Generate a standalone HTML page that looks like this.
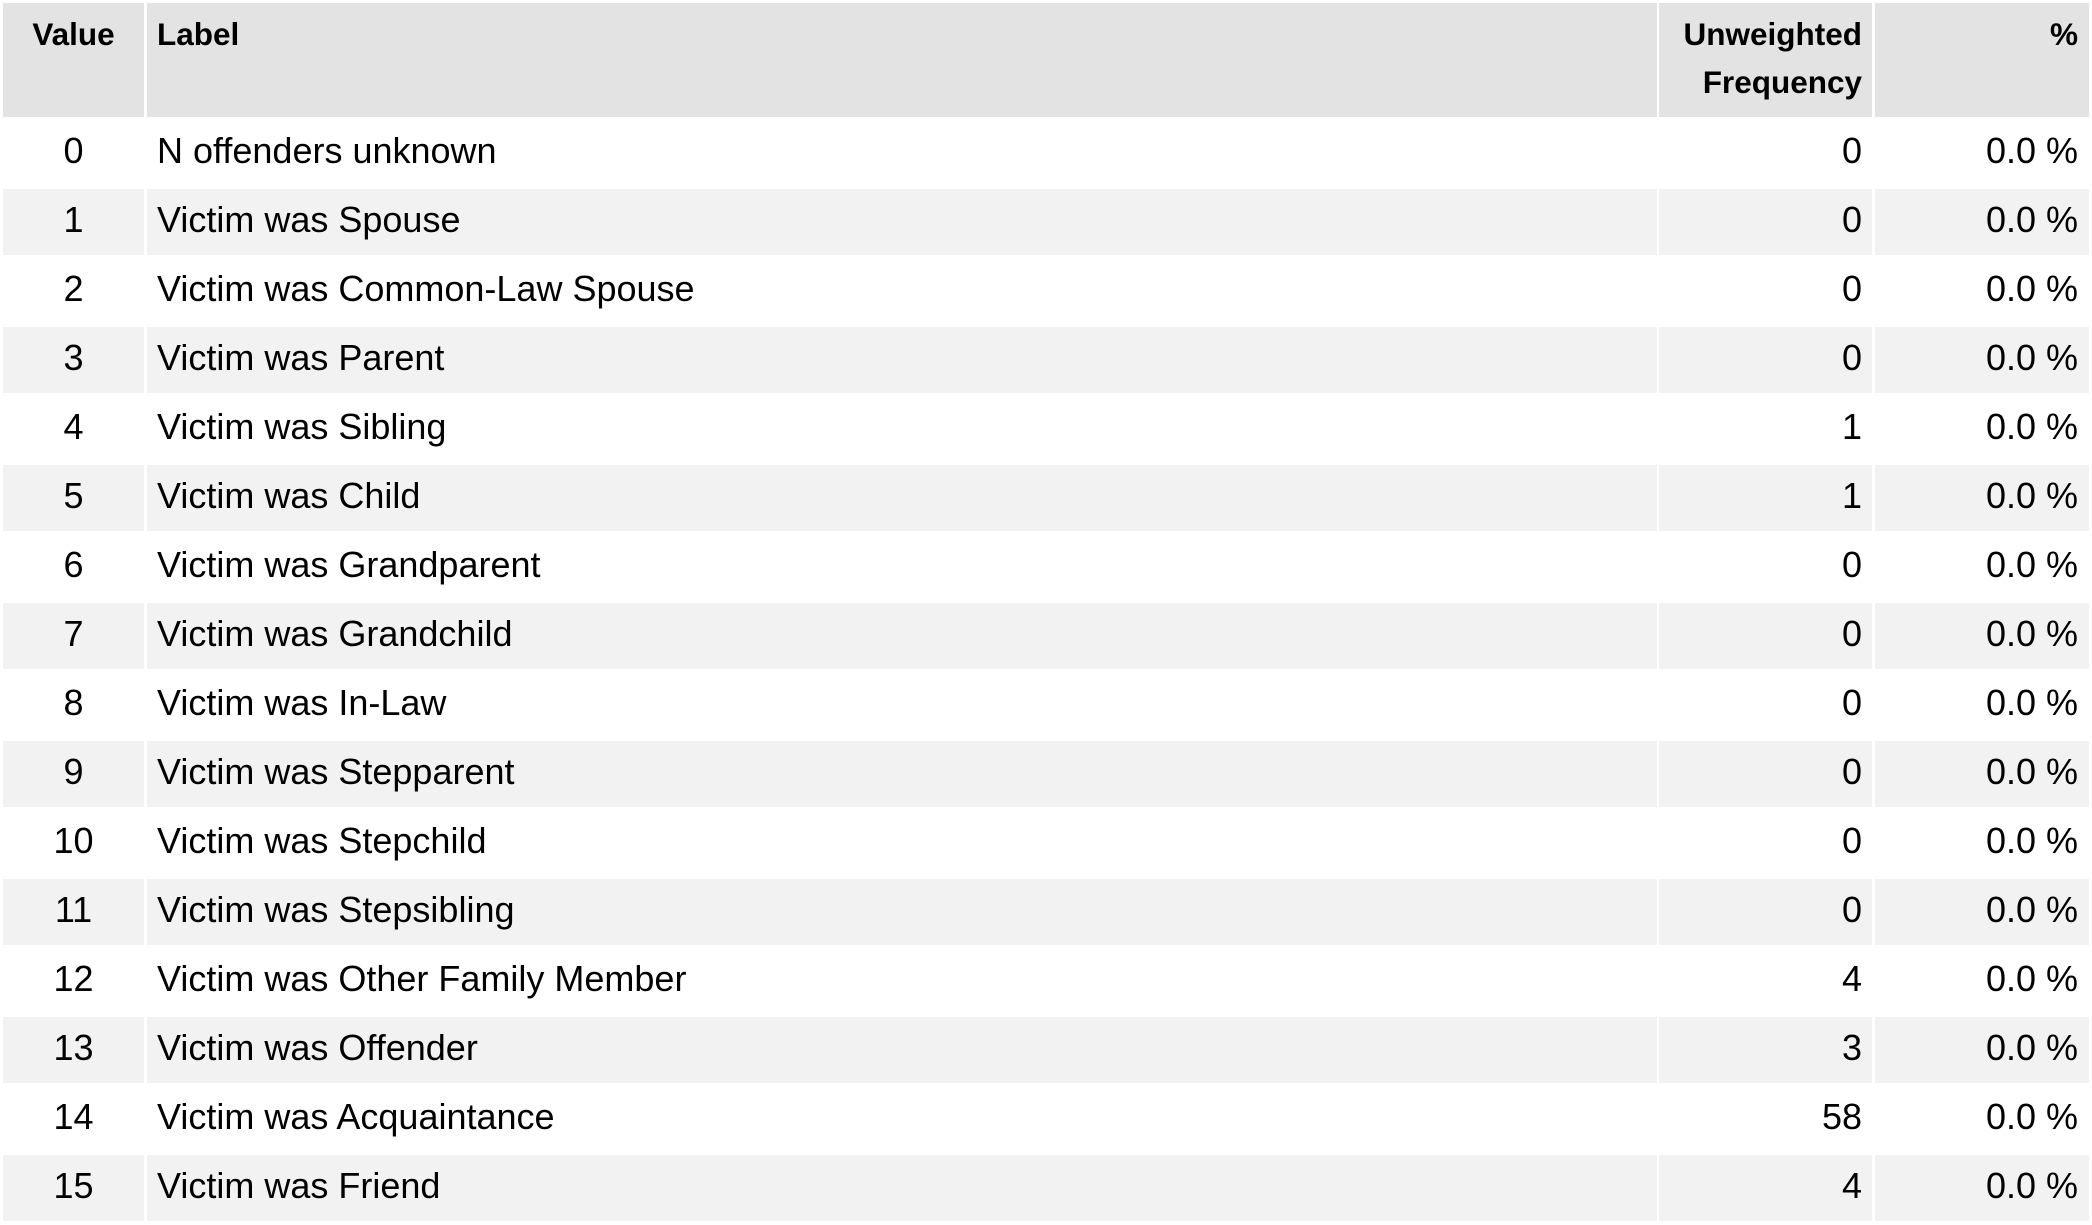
<!DOCTYPE html>
<html><head><meta charset="utf-8"><style>
body{margin:0;background:#fff;width:2092px;height:1225px;overflow:hidden;font-family:"Liberation Sans",Arial,sans-serif;color:#000}
.c{position:absolute;box-sizing:border-box;font-size:36px;line-height:40px;padding-top:11px;white-space:nowrap}
.h{background:#e3e3e3;font-weight:bold;line-height:48px;padding-top:7px;font-size:31.5px}
.g{background:#f2f2f2}
.c1{left:3px;width:141px;text-align:center}
.c2{left:147px;width:1510px;padding-left:10px}
.c3{left:1659px;width:213px;text-align:right;padding-right:10px}
.c4{left:1875px;width:214px;text-align:right;padding-right:11px}
</style></head><body>
<div class="c h c1" style="top:3px;height:114px">Value</div>
<div class="c h c2" style="top:3px;height:114px">Label</div>
<div class="c h c3" style="top:3px;height:114px">Unweighted<br>Frequency</div>
<div class="c h c4" style="top:3px;height:114px">%</div>
<div id="rows"></div>
<script>
var d=[["0","N offenders unknown","0"],["1","Victim was Spouse","0"],["2","Victim was Common-Law Spouse","0"],["3","Victim was Parent","0"],["4","Victim was Sibling","1"],["5","Victim was Child","1"],["6","Victim was Grandparent","0"],["7","Victim was Grandchild","0"],["8","Victim was In-Law","0"],["9","Victim was Stepparent","0"],["10","Victim was Stepchild","0"],["11","Victim was Stepsibling","0"],["12","Victim was Other Family Member","4"],["13","Victim was Offender","3"],["14","Victim was Acquaintance","58"],["15","Victim was Friend","4"]];
var h="";d.forEach(function(r,i){var t=120+69*i,g=i%2?" g":"",s='style="top:'+t+'px;height:66px"';
h+='<div class="c c1'+g+'" '+s+'>'+r[0]+'</div><div class="c c2'+g+'" '+s+'>'+r[1]+'</div><div class="c c3'+g+'" '+s+'>'+r[2]+'</div><div class="c c4'+g+'" '+s+'>0.0 %</div>';});
document.getElementById("rows").innerHTML=h;
</script>
</body></html>
